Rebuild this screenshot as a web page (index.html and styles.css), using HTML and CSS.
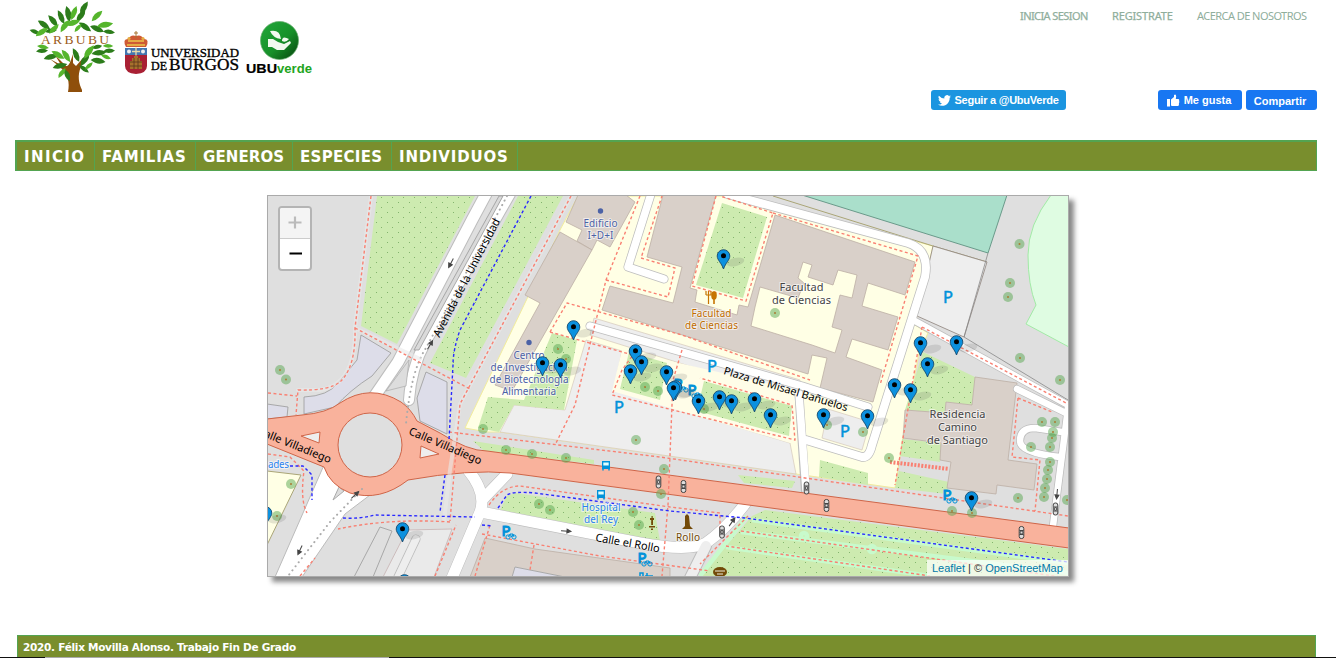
FILE: index.html
```html
<!DOCTYPE html>
<html lang="es">
<head>
<meta charset="utf-8">
<title>ARBUBU</title>
<link rel="stylesheet" href="styles.css">
</head>
<body>
<header class="header">
  <div class="logos">
    <svg class="logo-tree" viewBox="28 0 92 94" width="92" height="94">
      <defs><path id="lf" d="M-7.500 0Q-1-6 7.500 0Q1 5-7.500 0Z"/></defs>
      <path d="M68 92C70 82 68 75 60 67L50 59L61 65L55 55L66 66C69 67 71 60 73 54L73 63L76 66L83 58L81 67C77 75 79 84 82 90L82 92Z" fill="#8f4f0b"/>
      <g fill="#2c7c1b">
        <use href="#lf" transform="translate(35 32) rotate(20) scale(.75)"/><use href="#lf" transform="translate(44 25) rotate(35)"/><use href="#lf" transform="translate(53 21) rotate(50)"/><use href="#lf" transform="translate(61 17) rotate(65)"/><use href="#lf" transform="translate(68 14) rotate(78) scale(1.100)"/><use href="#lf" transform="translate(81 16) rotate(-55)"/><use href="#lf" transform="translate(84 8) rotate(-60)"/><use href="#lf" transform="translate(85 27) rotate(35)"/><use href="#lf" transform="translate(97 29) rotate(22)"/><use href="#lf" transform="translate(109 32) rotate(5) scale(.8)"/><use href="#lf" transform="translate(42 51) rotate(-5) scale(.8)"/><use href="#lf" transform="translate(51 57) rotate(-15)"/><use href="#lf" transform="translate(76 55) rotate(65)"/><use href="#lf" transform="translate(97 47) rotate(-15) scale(.7)"/><use href="#lf" transform="translate(85 60) rotate(-55)"/><use href="#lf" transform="translate(99 53) rotate(-8)"/><use href="#lf" transform="translate(98 61) rotate(8)"/><use href="#lf" transform="translate(60 66) rotate(-15)"/><use href="#lf" transform="translate(67 75) rotate(65) scale(.9)"/><use href="#lf" transform="translate(84 69) rotate(35) scale(.8)"/><use href="#lf" transform="translate(51 31) rotate(-10) scale(.8)"/><use href="#lf" transform="translate(109 51) rotate(-5) scale(.8)"/>
      </g>
      <g fill="#55b52c">
        <use href="#lf" transform="translate(42 32) rotate(-35)"/><use href="#lf" transform="translate(54 29) rotate(-45) scale(.9)"/><use href="#lf" transform="translate(65 26) rotate(-55)"/><use href="#lf" transform="translate(74 13) rotate(-70)"/><use href="#lf" transform="translate(73 23) rotate(-20)"/><use href="#lf" transform="translate(97 16) rotate(-45)"/><use href="#lf" transform="translate(105 25) rotate(-12) scale(1.100)"/><use href="#lf" transform="translate(78 28) rotate(-50) scale(.7)"/><use href="#lf" transform="translate(58 55) rotate(30)"/><use href="#lf" transform="translate(66 56) rotate(55)"/><use href="#lf" transform="translate(89 52) rotate(-55) scale(1.100)"/><use href="#lf" transform="translate(108 46) rotate(0) scale(.7)"/><use href="#lf" transform="translate(62 73) rotate(-55) scale(.8)"/><use href="#lf" transform="translate(89 66) rotate(-45) scale(.7)"/><use href="#lf" transform="translate(43 47) rotate(10) scale(.8)"/><use href="#lf" transform="translate(106 57) rotate(20) scale(.7)"/>
      </g>
      <text x="41" y="43.500" font-family="Liberation Serif, serif" font-size="13.500" fill="#9a5b20" textLength="68">ARBUBU</text>
    </svg>
    <svg class="logo-ubu" viewBox="122 30 120 46" width="120" height="46">
      <path d="M126 47Q122 39 128 39Q131 34 136 36Q141 34 144 39Q150 39 146 47Z" fill="#ce5a35"/>
      <path d="M127 45H145M128 41H144" stroke="#edc64b" stroke-width="1.500"/><circle cx="129" cy="38.500" r="1.600" fill="#e6ad43"/><circle cx="143" cy="38.500" r="1.600" fill="#e6ad43"/><path d="M136 31V38M134 33H138" stroke="#a87432"/>
      <path d="M125 48H147V66Q147 73 136 74Q125 73 125 66Z" fill="#a92034"/>
      <path d="M125 48H147V55H125Z" fill="#4476af"/><path d="M136 47.500V55.500M132 51.500H140" stroke="#e7d9aa" stroke-width="1.300"/><circle cx="129" cy="51.500" r="2" fill="#eee"/><circle cx="143" cy="51.500" r="2" fill="#eee"/>
      <path d="M130 69V61H132V58H134V56H138V58H140V61H142V69Z" fill="#a7712c"/><path d="M130 62H142M130 66H142M134 58V69M138 58V69" stroke="#59351c" stroke-width=".8"/>
      <g font-family="Liberation Serif, serif" stroke="#000" stroke-width=".35">
        <text x="151" y="56.500" font-size="13" textLength="88" lengthAdjust="spacingAndGlyphs">UNIVERSIDAD</text>
        <text x="151" y="69.500" font-size="13" textLength="16" lengthAdjust="spacingAndGlyphs">DE</text>
        <text x="169" y="69.500" font-size="16" textLength="70" lengthAdjust="spacingAndGlyphs">BURGOS</text>
      </g>
    </svg>
    <svg class="logo-verde" viewBox="244 20 70 56" width="70" height="56">
      <defs><linearGradient id="vg" x1="0" y1="0" x2="1" y2="1"><stop offset="0" stop-color="#22a83b"/><stop offset=".55" stop-color="#179029"/><stop offset="1" stop-color="#06400c"/></linearGradient></defs>
      <circle cx="279.500" cy="40.500" r="19" fill="url(#vg)" stroke="#64aa6b" stroke-width=".7"/>
      <path d="M270 31Q280 29 281 39Q273 38 270 31ZM282 41Q282 35 289 39Q286 43 282 41Z" fill="#f2f9ef"/>
      <path d="M268 39H273L278 42L284 44L290 41L291 43L284 50H277L272 47H268Z" fill="#f2f9ef"/>
      <text x="246" y="73" font-family="Liberation Sans, sans-serif" font-size="12.500" font-weight="bold" textLength="31" stroke="#000" stroke-width=".2" lengthAdjust="spacingAndGlyphs">UBU</text><text x="277" y="73" font-family="Liberation Sans, sans-serif" font-size="12.500" font-weight="bold" fill="#22a51d" textLength="35" lengthAdjust="spacingAndGlyphs">verde</text>
    </svg>
  </div>
  <div class="header-right">
    <nav class="account"><a class="strong a1">INICIA SESION</a><a class="strong a2">REGISTRATE</a><a class="a3">ACERCA DE NOSOTROS</a></nav>
    <div class="social">
      <a class="btn twitter"><svg width="13" height="11" viewBox="0 0 24 20"><path fill="#fff" d="M24 2.400a10 10 0 0 1-2.800.8A5 5 0 0 0 23.300.5a10 10 0 0 1-3.100 1.200 4.900 4.900 0 0 0-8.400 4.500A14 14 0 0 1 1.700 1a4.900 4.900 0 0 0 1.500 6.600A5 5 0 0 1 1 7v.1a4.900 4.900 0 0 0 3.900 4.800 5 5 0 0 1-2.200.1 4.900 4.900 0 0 0 4.600 3.400A10 10 0 0 1 0 17.500a14 14 0 0 0 7.500 2.200c9.100 0 14.300-7.700 14-14.600A10 10 0 0 0 24 2.400z"/></svg>Seguir a @UbuVerde</a>
      <a class="btn like"><svg width="14" height="13" viewBox="0 0 14 13"><path fill="#fff" d="M1 5h3v7.500H1zM5 5.500L8 3V1Q10-.5 10.200 2.500L9.800 5H12Q13.800 5 13 7Q13.800 8 12.900 9Q13.300 12 12 12H6L5 11.500z"/></svg>Me gusta</a>
      <a class="btn share">Compartir</a>
    </div>
  </div>
</header>
<nav class="menu"><a class="m1">INICIO</a><a class="m2">FAMILIAS</a><a class="m3">GENEROS</a><a class="m4">ESPECIES</a><a class="m5">INDIVIDUOS</a></nav>
<main class="map">
<svg class="tiles" viewBox="268 196 800 380" width="800" height="380">
  <defs>
    <pattern id="gr" width="11" height="10" patternUnits="userSpaceOnUse"><rect width="11" height="10" fill="#cdebb0"/><path d="M2 2h1v1h-1zM7 7h1v1h-1z" fill="#83b56d"/></pattern>
    <g id="pin"><ellipse cx="12" cy="6" rx="9" ry="4" transform="rotate(-14 12 6)" fill="#555" opacity=".16"/><path d="M0 13C-2 7-6.300 4-6.300 0A6.300 6.300 0 0 1 6.300 0C6.300 4 2 7 0 13Z" fill="#0c91df" stroke="#17496c" stroke-width=".9"/><circle r="2.500" cy="-.3" fill="#000"/></g>
    <g id="tree"><circle r="5" fill="#5aa751" opacity=".5"/><circle r="1" fill="#aa7b35"/></g>
    <g id="tl" fill="#ddd" stroke="#444" stroke-width="1"><rect x="-2.300" y="-6" width="4.600" height="12" rx="2"/><circle r="1.400"/><path d="M-2-2H2M-2 2H2" fill="none"/></g>
    <g id="bus"><path d="M-4-4.500H4V3.500H-4Z" fill="#0092da"/><path d="M-2.700-3H2.700V0H-2.700Z" fill="#dff"/><path d="M-3 3V5M3 3V5" stroke="#0092da" stroke-width="1.500"/></g>
    <g id="bike"><text x="-6.500" y="4" class="park pk">P</text><g fill="none" stroke="#0092da"><circle cx="0" cy="5" r="2.100"/><circle cx="6" cy="5" r="2.100"/><path d="M0 5L2 2H5L6 5M2 2L3.500 5L5 2"/></g></g>
    <g id="arr" fill="#444" stroke="#444"><path d="M-5 0H2" fill="none"/><path d="M1-2L5 0L1 2Z"/></g>
  </defs>
  <rect x="268" y="196" width="800" height="380" fill="#dfdfdf"/>
  <g class="grass">
    <path d="M377 196H475L397 344L361 326Z"/><path d="M518 196H563L466 378L430 363Z"/>
    <path d="M473 441L594 460V464L484 451Z"/><path d="M500 510L507 496L515 493L655 513L660 541Z"/>
  </g>
  <path d="M752 516L765 510L1068 549V576H700Z" fill="url(#gr)"/>
  <g fill="none" stroke="#c8facc" stroke-width="4.500"><path d="M747 516L700 576M752 520L1068 563M741 532L1068 573M726 547L930 576"/><circle cx="804" cy="536" r="3"/><circle cx="872" cy="549" r="3"/></g>
  <g fill="#dddde9" stroke="#999" stroke-width=".8"><path d="M361 335L391 353L372 376Q350 390 335 407L304 414V397Q328 396 338 383L357 360Z"/><path d="M426 372L447 382V434L420 421L417 398Z"/><path d="M267 404L288 407L287 417L267 419Z"/></g>
  <!-- campus -->
  <path d="M578 196L560 230L465 428L487 432L500 432L796 474L895 488L903 438L919 353L928 333L915 325L933 246L745 196Z" fill="#ffffe5" stroke="#f2ec9c"/>
  <path d="M802 195L988 253L1007 195Z" fill="#aadfcb" stroke="#6a9a8a"/>
  <path d="M773 196L933 246L987 262" fill="none" stroke="#aaa577"/>
  <path d="M1051 195Q1028 225 1028 255Q1028 285 1036 305L1026 324L1069 347V195Z" fill="#dffce2" stroke="#a2eaa6"/>
  <path d="M933 246L987 262L964 337L917 316Z" fill="#eee" stroke="#8d827b" stroke-width=".8"/><path d="M988 253L964 337L1068 400" fill="none" stroke="#888" stroke-width=".8"/>
  <g fill="#eee" stroke="#d5c9ba" stroke-width=".7"><path d="M594 318L800 380L798 400L590 335Z"/><path d="M586 340L622 351L614 390L790 443L796 474L500 432L514 405L565 410Z"/><path d="M828 409L870 422L862 450L822 438Z"/></g>
  <path d="M622 350L805 392L790 443L612 391Z" fill="#fffde8"/>
  <g class="grass">
    <path d="M722 203L767 217L743 298L696 285Z"/><path d="M552 333L577 340L564 410L514 405L499 432L478 428L488 397L524 400Z"/>
    <path d="M629 352L667 363L660 400L620 389Z"/><path d="M704 381L792 406L789 436L697 411Z"/>
    <path d="M923 352L975 377L972 405L946 402L945 413L905 410Z"/><path d="M902 439L941 443L940 462L900 456Z"/><path d="M899 471L949 482L947 494L895 488Z"/><path d="M820 460L868 473V485L819 477Z"/><path d="M738 475L795 481L792 488L744 483Z"/>
  </g>
  <g class="building">
    <path d="M578 195H626L635 202L610 247L597 240L592 250L577 241L582 230L566 222Z"/>
    <path d="M560 232L592 250L512 391L495 385L540 303L525 295Z"/>
    <path d="M663 195H716L690 288L697 290L695 302L737 315L739 305L748 307L775 215L915 262L905 295L868 283L862 306L898 317L888 350L852 339L846 357L882 370L873 402L820 388L827 358L812 355L808 374L602 310L610 286L673 303L682 267L647 257Z"/>
    <path d="M975 377L1017 383L1008 460L1037 464L1034 490L997 485L996 494L947 488L951 462L940 460L941 443L903 438L905 410L945 413L946 402L972 405Z"/>
    <path d="M485 538L535 549L670 568V577H470Z"/>
  </g>
  <path d="M760 287L798 298L804 283L798 278L803 262L812 265L808 277L833 285L838 270L857 275L852 298L840 295L832 327L842 330L835 353L812 345L751 326L755 307Z" fill="#ffffe5" stroke="#bcaea4" stroke-width=".8"/>
  <path d="M512 577L515 567L565 577Z" fill="#dddde9" stroke="#aaa"/>
  <path d="M267 471L301 475L267 545Z" fill="#ffffe5" stroke="#aaa577"/>
  <g fill="#eaeaea" stroke="#c6b3b3" stroke-width=".8"><path d="M383 577L407 530L452 529L434 577Z"/></g>
  <path d="M354 577L380 527L392 531L373 577" fill="none" stroke="#999" stroke-width=".8"/>
  <!-- roads: casing, then fill -->
  <g class="casing">
    <path d="M372 400L398 362Q412 335 472 220L486 194" stroke-width="13"/><path d="M409 400Q411 368 426 341L510 194" stroke-width="12"/>
    <path d="M727 194L908 243Q930 250 925 277L872 445Q869 458 862 457L806 440" stroke-width="9.500"/>
    <path d="M590 326L802 386L868 407M799 394L806 500M664 279L628 267L651 194" stroke-width="9"/>
    <path d="M915 321L1068 405M1017 389L1068 414M1068 408L1053 526M1062 432L1035 428Q1020 428 1020 441Q1020 453 1060 457" stroke-width="8"/>
    <path d="M468 470Q487 493 480 512L452 578M507 474L482 500M481 512L640 543Q690 552 706 543Q725 530 745 504M706 546L690 578" stroke-width="12"/>
    <path d="M416 539L398 577" stroke-width="9"/>
  </g>
  <g class="road">
    <path d="M372 400L398 362Q412 335 472 220L486 194" stroke-width="11"/><path d="M409 400Q411 368 426 341L510 194" stroke-width="10"/>
    <path d="M727 194L908 243Q930 250 925 277L872 445Q869 458 862 457L806 440" stroke-width="8"/>
    <path d="M590 326L802 386L868 407M799 394L806 490M664 279L628 267L651 194" stroke-width="7.500"/>
    <path d="M915 321L1068 405M1017 389L1068 414M1068 408L1053 526M1062 432L1035 428Q1020 428 1020 441Q1020 453 1060 457" stroke-width="6.500"/>
    <path d="M468 470Q487 493 480 512L452 578M507 474L482 500M481 512L640 543Q690 552 706 543Q725 530 745 504" stroke-width="11"/>
    <path d="M706 546L690 578" stroke="#eee" stroke-width="10"/><path d="M416 539L398 577" stroke="#eee" stroke-width="7.500"/>
  </g>
  <path d="M275 577L324 465L345 480L370 495L345 514L302 577Z" fill="#fff" stroke="#bbb"/><path d="M333 500L339 487L344 491Z" fill="#ddd" stroke="#aaa"/>
  <path d="M499 196L414 350L419 350L503 196Z" fill="#dadada" stroke="#999" stroke-width=".8"/><path d="M386 391L409 360L406 386Z" fill="#ddd" stroke="#aaa" stroke-width=".7"/>
  <!-- main avenue and roundabout -->
  <path d="M267 419L302 415Q327 413 340 403Q370 383 401 402Q411 409 417 421L440 433Q468 451 487 451L1069 528V548L510 473Q470 469 408 480Q380 502 350 493Q330 485 324 467L267 444Z" fill="#f9b29c" stroke="#cf6548"/>
  <circle cx="370" cy="445" r="32" fill="#dfdfdf" stroke="#cf6548"/><path d="M301 436L320 432L319 443ZM421 446L439 454L420 458Z" fill="#eee" stroke="#cf6548"/>
  <path class="dot" d="M507 196L426 348Q411 370 406 424M362 489L330 522L288 576"/>
  <!-- foot and cycle paths -->
  <g class="foothalo"><path d="M371 196L355 328Q356 385 320 390H298M355 328L420 359M571 196L460 404L450 470M450 470L444 521"/></g>
  <g class="foot">
    <path d="M371 196L355 328Q356 366 341 381Q330 391 298 390L296 415M355 328L470 389M571 196L460 404L450 521M450 522Q390 518 338 529M268 393L297 396M268 454L290 457L304 471Q300 500 307 513M449 432L660 457L1068 516M640 196L606 280L575 405L555 445M606 280L668 297L675 268L641 258L662 196M550 332L567 303L682 335L810 380M550 332L633 355L622 370L612 395L795 440L792 405L700 378M716 196L692 286L746 301L773 213L720 196M773 213L918 256L880 385M922 327L1068 404M922 327L895 485M489 505Q502 486 520 486L670 507L720 513V528M682 350L673 380L668 505L662 576M482 534L600 556L710 571M475 576L490 525M748 516L700 564M741 531L1068 578M726 546L930 576M1018 398L1012 457L1040 460L1035 511M1018 398L1052 412M534 545L530 570M435 576L456 525M300 576L315 558"/>
  </g>
  <path d="M890 462L949 469" stroke="#f98072" stroke-width="4" stroke-dasharray="2 1.500"/>
  <path class="cycle" d="M531 196L460 330Q453 350 453 365L449 440M290 466H303L312 475V500M343 518Q360 519 375 515L475 517M445 475L440 512M498 508L507 495Q513 491 535 493L670 511L745 518L1068 562M482 525L493 526"/>
  <!-- trees -->
  <g>
    <use href="#tree" x="280" y="370"/><use href="#tree" x="286" y="379.500"/><use href="#tree" x="291" y="484"/><use href="#tree" x="277" y="516"/><use href="#tree" x="558" y="349"/><use href="#tree" x="566" y="359"/><use href="#tree" x="483" y="429"/><use href="#tree" x="506" y="450"/><use href="#tree" x="532" y="454"/><use href="#tree" x="566" y="458"/><use href="#tree" x="539" y="504"/><use href="#tree" x="550" y="510"/><use href="#tree" x="636" y="440"/><use href="#tree" x="664" y="469"/><use href="#tree" x="661" y="494"/><use href="#tree" x="633" y="512"/><use href="#tree" x="639" y="525"/><use href="#tree" x="645" y="387"/><use href="#tree" x="658" y="391"/><use href="#tree" x="775" y="313"/><use href="#tree" x="827" y="425"/><use href="#tree" x="863" y="432"/><use href="#tree" x="889" y="458"/><use href="#tree" x="1019.500" y="244"/><use href="#tree" x="1010" y="283"/><use href="#tree" x="1008" y="297"/><use href="#tree" x="1020" y="358"/><use href="#tree" x="1060" y="380"/><use href="#tree" x="1042" y="422"/><use href="#tree" x="1055" y="422"/><use href="#tree" x="1053" y="432"/><use href="#tree" x="1052" y="438"/><use href="#tree" x="1031" y="447"/><use href="#tree" x="1050" y="447"/><use href="#tree" x="1050" y="462"/><use href="#tree" x="1048" y="470"/><use href="#tree" x="1047" y="479"/><use href="#tree" x="1045" y="488"/><use href="#tree" x="1044" y="497"/><use href="#tree" x="1018" y="498"/><use href="#tree" x="1067" y="500"/><use href="#tree" x="952" y="511"/><use href="#tree" x="972" y="513"/><use href="#tree" x="704" y="409"/>
  </g>
  <!-- symbols -->
  <use href="#tl" x="658.500" y="482"/><use href="#tl" x="683.500" y="486.500"/><use href="#tl" x="806.500" y="488"/><use href="#tl" x="826.500" y="505.500"/><use href="#tl" x="722" y="532"/><use href="#tl" x="1021.500" y="532.500"/><use href="#tl" x="1055.500" y="509"/>
  <use href="#bus" x="606" y="465.500"/><use href="#bus" x="601" y="494.500"/>
  <use href="#bike" x="508" y="532"/><use href="#bike" x="644" y="559"/><use href="#bike" x="949" y="496"/><use href="#bike" x="680" y="385"/><use href="#bike" x="694" y="391"/>
  <path d="M640 577V573H643V577M645 576H653M647 573V577" stroke="#0092da" fill="none" stroke-width="1.500"/>
  <use href="#arr" transform="translate(451 263) rotate(118)"/><use href="#arr" transform="translate(430 345) rotate(-60)"/><use href="#arr" transform="translate(355 495) rotate(-43)"/><use href="#arr" transform="translate(300 550) rotate(115)"/><use href="#arr" transform="translate(566 531) rotate(4)"/><use href="#arr" transform="translate(732 522) rotate(-55)"/><use href="#arr" transform="translate(1057 494) rotate(95)"/>
  <text x="707" y="371.500" class="park">P</text><text x="614" y="413" class="park">P</text><text x="840" y="437" class="park">P</text><text x="943" y="303" class="park">P</text>
  <circle cx="600.500" cy="211" r="2.700" fill="#4c62a6"/><circle cx="529" cy="342.500" r="2.700" fill="#4c62a6"/>
  <path d="M706 291V295M708.500 291V295M711 291V295M706 295H711M708.500 295V304" stroke="#c77400" stroke-width="1.200" fill="none"/><ellipse cx="714" cy="295.500" rx="2.800" ry="4.200" fill="#c77400"/><path d="M714 297V304" stroke="#c77400" stroke-width="1.600"/>
  <g fill="#734a08"><path d="M685 516L687 514L689 516L690 526L693 529H682L685 526Z"/><ellipse cx="720" cy="572" rx="7" ry="5"/><path d="M651.500 516H652.700V518H654V520H653V525H651.200V520H650V518H651.500ZM649 526H655V527.500H649ZM651 528.500H653V530H651Z"/></g><path d="M715 571H725M717 574H723" stroke="#eed" stroke-width="1"/>
  <!-- labels -->
  <g class="lbl blue"><text x="600.500" y="227" textLength="34">Edificio</text><text x="600.500" y="239" textLength="26">I+D+I</text><text x="529" y="358.500" textLength="31">Centro</text><text x="529" y="370.500" textLength="77">de Investigación</text><text x="529" y="382.500" textLength="79">de Biotecnología</text><text x="529" y="394.500" textLength="54">Alimentaria</text></g>
  <g class="lbl orange"><text x="711.500" y="317" textLength="40">Facultad</text><text x="711.500" y="329" textLength="53">de Ciencias</text></g>
  <g class="lbl dark"><text x="801.500" y="290.500" textLength="44">Facultad</text><text x="801.500" y="303.500" textLength="59">de Ciencias</text><text x="957.500" y="418" textLength="56">Residencia</text><text x="957.500" y="431" textLength="39">Camino</text><text x="957.500" y="444" textLength="61">de Santiago</text></g>
  <g class="lbl hosp"><text x="601" y="511" textLength="39">Hospital</text><text x="601" y="523" textLength="34">del Rey</text><text x="278.500" y="468" textLength="21">ades</text></g>
  <text class="lbl brown" x="688" y="541" textLength="24">Rollo</text>
  <g class="street"><text transform="translate(439.500 338) rotate(-62.500)" textLength="132">Avenida de la Universidad</text><text transform="translate(408 434) rotate(23)" textLength="78">Calle Villadiego</text><text transform="translate(257 434) rotate(22)" textLength="78">Calle Villadiego</text><text transform="translate(723 374) rotate(16.800)" textLength="129">Plaza de Misael Bañuelos</text><text transform="translate(595 541) rotate(10)" textLength="65">Calle el Rollo</text></g>
  <!-- markers -->
  <g>
    <use href="#pin" x="723.500" y="256"/><use href="#pin" x="573.500" y="327"/><use href="#pin" x="956.500" y="342"/><use href="#pin" x="920.500" y="343"/><use href="#pin" x="635.500" y="351"/><use href="#pin" x="641.500" y="362"/><use href="#pin" x="542.500" y="363"/><use href="#pin" x="927.500" y="364"/><use href="#pin" x="560.500" y="365"/><use href="#pin" x="630.500" y="371"/><use href="#pin" x="666.500" y="372"/><use href="#pin" x="894.500" y="385"/><use href="#pin" x="675.500" y="387"/><use href="#pin" x="673.500" y="388"/><use href="#pin" x="910.500" y="390"/><use href="#pin" x="719.500" y="397"/><use href="#pin" x="754.500" y="399"/><use href="#pin" x="698.500" y="401"/><use href="#pin" x="731.500" y="401"/><use href="#pin" x="823.500" y="415"/><use href="#pin" x="770.500" y="415"/><use href="#pin" x="867.500" y="416"/><use href="#pin" x="971.500" y="498"/><use href="#pin" x="265.500" y="513"/><use href="#pin" x="402.500" y="529"/><use href="#pin" x="404.500" y="581"/>
  </g>
</svg>
<div class="zoom"><span class="off"><svg width="30" height="30" viewBox="0 0 30 30"><path d="M8.500 14.500H21.500M15 8.500V20.500" stroke="#bbb" stroke-width="2.200"/></svg></span><span><svg width="30" height="30" viewBox="0 0 30 30"><path d="M9.500 14.500H22" stroke="#000" stroke-width="2"/></svg></span></div>
<div class="credit"><a>Leaflet</a> | © <a>OpenStreetMap</a></div>
</main>
<footer class="footer">2020. Félix Movilla Alonso. Trabajo Fin De Grado</footer>
<div class="edge"><div class="edge-thumb"></div></div>
</body>
</html>
```
FILE: styles.css
```css
* { box-sizing: border-box; }
body { margin: 0; height: 658px; overflow: hidden; background: #fff; display: flex; flex-direction: column; }
.header { height: 140px; flex: none; display: flex; justify-content: space-between; padding: 0 19px 0 28px; }
.logos { display: flex; align-items: flex-start; }
.logos svg { display: block; }
.logo-ubu { margin: 30px 0 0 2px; }
.logo-verde { margin: 20px 0 0 2px; }
.header-right { display: flex; flex-direction: column; align-items: flex-end; padding-top: 8px; }
.account { display: flex; height: 16px; margin-right: 9px; font: 11px/16px "Noto Sans", sans-serif; color: #8fae9c; white-space: nowrap; }
.strong { -webkit-text-stroke: .25px #8fae9c; }
.a1 { width: 92px; letter-spacing: -.58px; }
.a2 { width: 85px; letter-spacing: -.15px; }
.a3 { width: 111px; letter-spacing: -.55px; }
.social { display: flex; margin-top: 66px; height: 20px; }
.btn { display: flex; align-items: center; justify-content: center; gap: 3px; height: 20px; border-radius: 3px; color: #fff; font: bold 11px "Liberation Sans", Arial, sans-serif; white-space: nowrap; }
.twitter { width: 135px; background: #1b95e0; letter-spacing: -.25px; }
.like { width: 84px; margin-left: 92px; background: #1877f2; gap: 4px; padding-right: 3px; }
.share { width: 71px; margin-left: 4px; background: #1877f2; padding: 2px 3px 0 0; }
.menu { flex: none; margin: 0 19px 0 15px; height: 31px; display: flex; background: #798e2d; border: 2px solid #53a451; border-right-width: 1px; border-bottom-width: 1px; color: #fff; font: bold 15px/30px "DejaVu Sans", Verdana, sans-serif; }
.menu a { border-right: 1px solid #53a451; padding-left: 7px; white-space: nowrap; }
.m1 { width: 78px; letter-spacing: 1.4px; }
.m2 { width: 101px; letter-spacing: .8px; }
.m3 { width: 97px; letter-spacing: .1px; }
.m4 { width: 99px; letter-spacing: .3px; }
.m5 { width: 126px; letter-spacing: .8px; }
.map { flex: none; position: relative; width: 802px; height: 382px; margin: 24px 0 0 267px; border: 1px solid #aaa; box-shadow: 5px 5px 5px #888; }
.tiles { display: block; }
.zoom { position: absolute; left: 10px; top: 10px; width: 34px; height: 65px; border: 2px solid #b4b4b4; border-radius: 4px; background: #fff; overflow: hidden; }
.zoom span, .zoom svg { display: block; }
.zoom .off { background: #f4f4f4; border-bottom: 1px solid #ccc; }
.credit { position: absolute; right: 0; bottom: 0; height: 16px; width: 141px; padding: 0 5px; background: rgba(255, 255, 255, .7); font: 11px/16px "Liberation Sans", Arial, sans-serif; color: #333; white-space: nowrap; }
.credit a { color: #0078a8; }
.footer { flex: none; margin: 58px 20px 0 17px; height: 22px; padding-left: 5px; background: #798e2d; border: 1px solid #53a451; border-bottom: 0; color: #fff; font: bold 10.500px/23px "DejaVu Sans", Verdana, sans-serif; letter-spacing: -.28px; }
.edge { height: 1px; flex: none; background: #111; padding-left: 45px; }
.edge-thumb { width: 344px; height: 1px; background: #aaa; }
.grass { fill: url(#gr); }
.building { fill: #d9d0c9; stroke: #bcaea4; stroke-width: .8; }
.casing, .road, .foot, .foothalo, .cycle, .dot { fill: none; stroke-linejoin: round; stroke-linecap: round; }
.casing { stroke: #bdbdbd; }
.road { stroke: #fff; }
.foothalo { stroke: #e9e9e9; stroke-width: 4; opacity: .6; }
.foot { stroke: #f98072; stroke-width: 1.400; stroke-dasharray: 3 2.500; stroke-linecap: butt; }
.cycle { stroke: #2929ff; stroke-width: 1.400; stroke-dasharray: 3 2.500; stroke-linecap: butt; }
.dot { stroke: #aaa; stroke-width: 2; stroke-dasharray: .1 5; }
.park { font: 16.500px "Noto Sans", sans-serif; fill: #0092da; stroke: #0092da; stroke-width: .5px; }
.pk { font-size: 15px; stroke-width: 1px; }
.lbl { font: 10px "Noto Sans", sans-serif; text-anchor: middle; paint-order: stroke; stroke: rgba(255, 255, 255, .6); stroke-width: 2px; }
.blue { fill: #4c62a6; }
.orange { fill: #c06c00; }
.dark { fill: #444; font-size: 11px; }
.hosp { fill: #2a82ef; }
.brown { fill: #734a08; }
.street { font: 11px "Noto Sans", sans-serif; fill: #000; }
```
